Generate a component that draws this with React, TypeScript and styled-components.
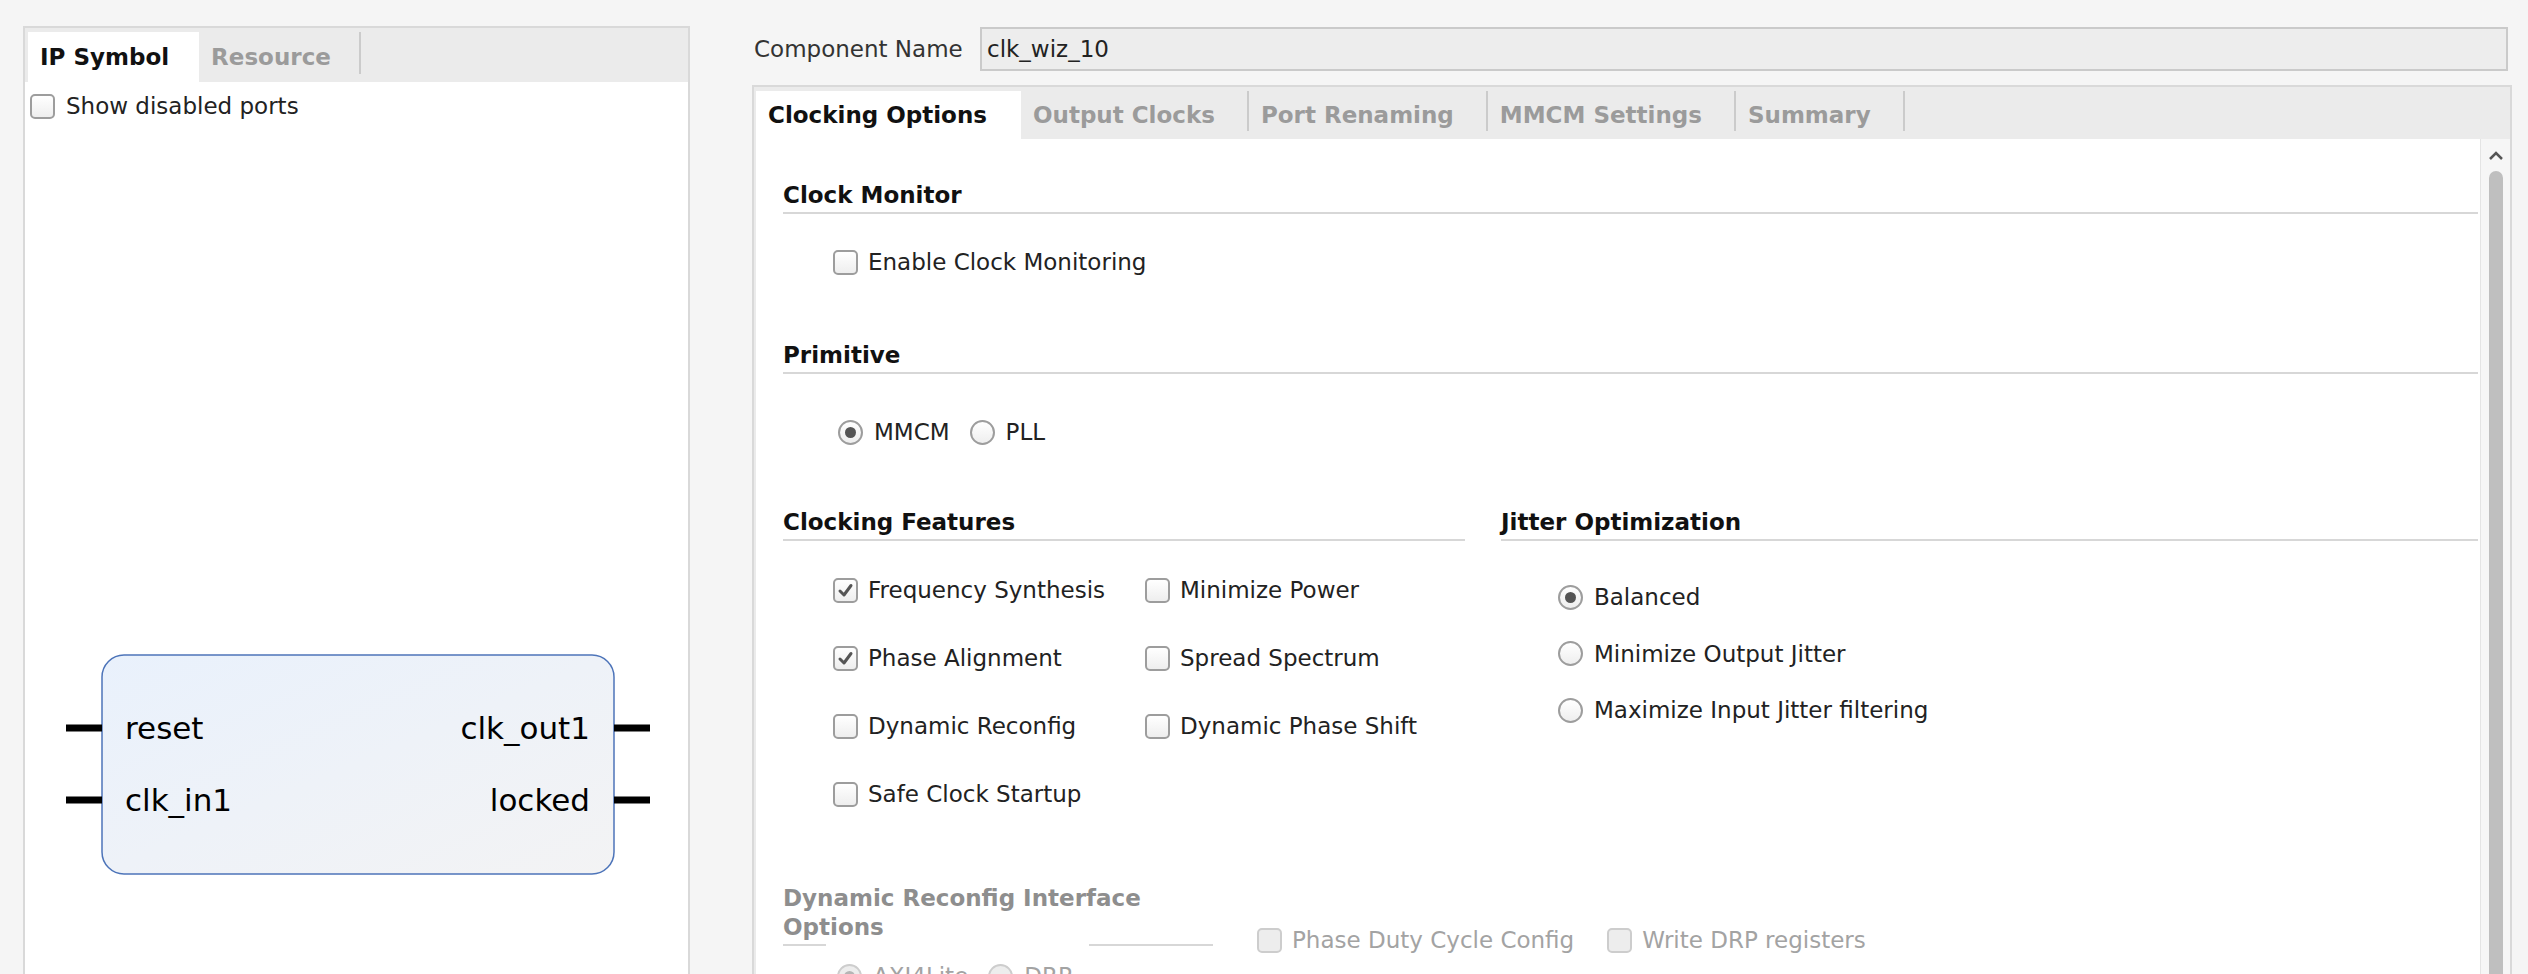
import React from "react";
import styled, { createGlobalStyle } from "styled-components";

const GlobalStyle = createGlobalStyle`
  html, body {
    margin: 0;
    padding: 0;
    background: #f5f5f5;
  }
  body {
    font-family: "DejaVu Sans", "Noto Sans", sans-serif;
    font-size: 23px;
    color: #222;
    overflow: hidden;
  }
`;

const Page = styled.div`
  display: flex;
  align-items: stretch;
  gap: 62px;
  height: 974px;
  padding: 26px 16px 0 23px;
  box-sizing: border-box;
  overflow: hidden;
`;

const LeftPanel = styled.section`
  flex: 0 0 667px;
  box-sizing: border-box;
  border: 2px solid #d9d9d9;
  border-bottom: none;
  background: #ffffff;
  display: flex;
  flex-direction: column;
`;

const TabBar = styled.div<{ $height: number; $left: number }>`
  display: flex;
  align-items: stretch;
  height: ${(p) => p.$height}px;
  padding: 4px 0 0 ${(p) => p.$left}px;
  box-sizing: border-box;
  background: #ebebeb;
  flex: none;
`;

const Tab = styled.div<{ $active?: boolean; $right?: number }>`
  position: relative;
  display: flex;
  align-items: center;
  padding: 0 ${(p) => p.$right ?? 30}px 0 12px;
  font-weight: bold;
  white-space: nowrap;
  color: ${(p) => (p.$active ? "#111" : "#9b9b9b")};
  background: ${(p) => (p.$active ? "#ffffff" : "transparent")};

  &::after {
    content: "";
    display: ${(p) => (p.$active ? "none" : "block")};
    position: absolute;
    right: 0;
    top: 0;
    bottom: 8px;
    width: 2px;
    background: #cbcbcb;
  }
`;

const LeftBody = styled.div`
  display: flex;
  flex-direction: column;
  padding: 10px 0 0 5px;
`;

const SymbolWrap = styled.div`
  margin: 534px 0 0 34px;
  line-height: 0;
`;

const Item = styled.label<{ $disabled?: boolean; $gap?: number }>`
  display: inline-flex;
  align-items: center;
  gap: ${(p) => p.$gap ?? 10}px;
  height: 28px;
  line-height: 28px;
  white-space: nowrap;
  color: ${(p) => (p.$disabled ? "#a3a3a3" : "#222")};
`;

const Box = styled.span<{ $disabled?: boolean }>`
  width: 25px;
  height: 25px;
  box-sizing: border-box;
  border: 2px solid ${(p) => (p.$disabled ? "#cdcdcd" : "#9d9d9d")};
  border-radius: 5px;
  background: ${(p) =>
    p.$disabled ? "#ededed" : "linear-gradient(#ffffff, #eeeeee)"};
  display: inline-flex;
  align-items: center;
  justify-content: center;
  flex: none;
`;

const Round = styled.span<{ $disabled?: boolean }>`
  width: 25px;
  height: 25px;
  box-sizing: border-box;
  border: 2px solid ${(p) => (p.$disabled ? "#cdcdcd" : "#9d9d9d")};
  border-radius: 50%;
  background: ${(p) =>
    p.$disabled ? "#ededed" : "linear-gradient(#ffffff, #eeeeee)"};
  display: inline-flex;
  align-items: center;
  justify-content: center;
  flex: none;
`;

const Dot = styled.span<{ $disabled?: boolean }>`
  width: 11px;
  height: 11px;
  border-radius: 50%;
  background: ${(p) => (p.$disabled ? "#b5b5b5" : "#555555")};
`;

const RightColumn = styled.div`
  flex: 1;
  min-width: 0;
  display: flex;
  flex-direction: column;
`;

const NameRow = styled.div`
  display: flex;
  align-items: center;
  height: 44px;
  margin-top: 1px;
  padding-left: 2px;
  flex: none;
`;

const NameLabel = styled.span`
  width: 226px;
  color: #333;
  white-space: nowrap;
`;

const NameField = styled.div`
  flex: 1;
  height: 44px;
  box-sizing: border-box;
  margin-right: 4px;
  padding-left: 5px;
  border: 2px solid #cacaca;
  background: #ededed;
  display: flex;
  align-items: center;
  color: #222;
`;

const TabPanel = styled.div`
  flex: 1;
  margin-top: 14px;
  border: 2px solid #d9d9d9;
  border-bottom: none;
  background: #ebebeb;
  display: flex;
  flex-direction: column;
`;

const PanelBody = styled.div`
  flex: 1;
  display: flex;
  padding-left: 2px;
`;

const Form = styled.div`
  flex: 1;
  background: #ffffff;
  padding: 42px 2px 0 27px;
  display: flex;
  flex-direction: column;
`;

const ScrollTrack = styled.div`
  flex: 0 0 30px;
  background: #f6f6f6;
  border-left: 1px solid #e4e4e4;
  display: flex;
  flex-direction: column;
  align-items: center;
  padding-top: 12px;
  box-sizing: border-box;
`;

const ScrollThumb = styled.div`
  width: 14px;
  flex: 1;
  margin-top: 10px;
  border-radius: 7px 7px 0 0;
  background: #bfbfbf;
`;

const GroupTitle = styled.div<{ $top?: number }>`
  font-weight: bold;
  line-height: 28px;
  padding-bottom: 3px;
  margin-top: ${(p) => p.$top ?? 0}px;
  border-bottom: 2px solid #d7d7d7;
  color: #111;
`;

const OptionRow = styled.div<{ $top: number; $indent: number; $gap?: number }>`
  display: flex;
  align-items: center;
  gap: ${(p) => p.$gap ?? 20}px;
  height: 28px;
  margin-top: ${(p) => p.$top}px;
  padding-left: ${(p) => p.$indent}px;
`;

const Columns = styled.div`
  display: grid;
  grid-template-columns: 682px 1fr;
  column-gap: 36px;
  margin-top: 62px;
`;

const Column = styled.div`
  display: flex;
  flex-direction: column;
`;

const CheckGrid = styled.div`
  display: grid;
  grid-template-columns: 312px auto;
  grid-auto-rows: 28px;
  row-gap: 40px;
  margin-top: 35px;
  padding-left: 50px;
`;

const RadioList = styled.div`
  display: flex;
  flex-direction: column;
  gap: 28.5px;
  margin-top: 42px;
  padding-left: 57px;
`;

const DynGroup = styled.div`
  display: flex;
  align-items: flex-start;
  margin-top: 76px;
`;

const DynHead = styled.div`
  flex: 0 0 430px;
  display: flex;
  flex-direction: column;
`;

const DynTitle = styled.div`
  font-weight: bold;
  line-height: 29px;
  padding-bottom: 2px;
  color: #8e8e8e;
`;

const BrokenRule = styled.div`
  display: flex;
  justify-content: space-between;
  height: 2px;

  span {
    background: #d7d7d7;
  }
  span:first-child {
    width: 43px;
  }
  span:last-child {
    width: 124px;
  }
`;

const DynOptions = styled.div`
  display: flex;
  gap: 33px;
  margin: 42px 0 0 44px;
`;

const Check = ({
  label,
  checked,
  disabled,
  gap,
}: {
  label: string;
  checked?: boolean;
  disabled?: boolean;
  gap?: number;
}) => (
  <Item $disabled={disabled} $gap={gap}>
    <Box $disabled={disabled}>
      {checked && (
        <svg width="17" height="17" viewBox="0 0 17 17">
          <path
            d="M3 9 L7 13 L14 3.5"
            fill="none"
            stroke="#555"
            strokeWidth="3"
            strokeLinecap="round"
            strokeLinejoin="round"
          />
        </svg>
      )}
    </Box>
    {label}
  </Item>
);

const Radio = ({
  label,
  checked,
  disabled,
}: {
  label: string;
  checked?: boolean;
  disabled?: boolean;
}) => (
  <Item $disabled={disabled} $gap={11}>
    <Round $disabled={disabled}>{checked && <Dot $disabled={disabled} />}</Round>
    {label}
  </Item>
);

const IpSymbol = () => (
  <svg width="588" height="224" viewBox="0 0 588 224">
    <defs>
      <linearGradient id="blockFill" x1="0" y1="0" x2="1" y2="1">
        <stop offset="0" stopColor="#e9f1fc" />
        <stop offset="1" stopColor="#f3f3f4" />
      </linearGradient>
    </defs>
    <rect
      x="38"
      y="1"
      width="512"
      height="219"
      rx="22"
      fill="url(#blockFill)"
      stroke="#4d74b9"
      strokeWidth="1.5"
    />
    <g stroke="#000" strokeWidth="7">
      <line x1="2" y1="74" x2="38" y2="74" />
      <line x1="2" y1="146" x2="38" y2="146" />
      <line x1="550" y1="74" x2="586" y2="74" />
      <line x1="550" y1="146" x2="586" y2="146" />
    </g>
    <g fontFamily="DejaVu Sans, sans-serif" fontSize="31" fill="#000">
      <text x="61" y="85">reset</text>
      <text x="61" y="157">clk_in1</text>
      <text x="526" y="85" textAnchor="end">
        clk_out1
      </text>
      <text x="526" y="157" textAnchor="end">
        locked
      </text>
    </g>
  </svg>
);

const rightTabs = [
  "Clocking Options",
  "Output Clocks",
  "Port Renaming",
  "MMCM Settings",
  "Summary",
];

export default function App() {
  return (
    <>
      <GlobalStyle />
      <Page>
        <LeftPanel>
          <TabBar $height={54} $left={3}>
            <Tab $active>IP Symbol</Tab>
            <Tab>Resource</Tab>
          </TabBar>
          <LeftBody>
            <Check label="Show disabled ports" gap={11} />
            <SymbolWrap>
              <IpSymbol />
            </SymbolWrap>
          </LeftBody>
        </LeftPanel>

        <RightColumn>
          <NameRow>
            <NameLabel>Component Name</NameLabel>
            <NameField>clk_wiz_10</NameField>
          </NameRow>

          <TabPanel>
            <TabBar $height={52} $left={2}>
              {rightTabs.map((t, i) => (
                <Tab key={t} $active={i === 0} $right={34}>
                  {t}
                </Tab>
              ))}
            </TabBar>
            <PanelBody>
              <Form>
                <GroupTitle>Clock Monitor</GroupTitle>
                <OptionRow $top={34} $indent={50}>
                  <Check label="Enable Clock Monitoring" />
                </OptionRow>

                <GroupTitle $top={65}>Primitive</GroupTitle>
                <OptionRow $top={44} $indent={55}>
                  <Radio label="MMCM" checked />
                  <Radio label="PLL" />
                </OptionRow>

                <Columns>
                  <Column>
                    <GroupTitle>Clocking Features</GroupTitle>
                    <CheckGrid>
                      <Check label="Frequency Synthesis" checked />
                      <Check label="Minimize Power" />
                      <Check label="Phase Alignment" checked />
                      <Check label="Spread Spectrum" />
                      <Check label="Dynamic Reconfig" />
                      <Check label="Dynamic Phase Shift" />
                      <Check label="Safe Clock Startup" />
                    </CheckGrid>
                  </Column>
                  <Column>
                    <GroupTitle>Jitter Optimization</GroupTitle>
                    <RadioList>
                      <Radio label="Balanced" checked />
                      <Radio label="Minimize Output Jitter" />
                      <Radio label="Maximize Input Jitter filtering" />
                    </RadioList>
                  </Column>
                </Columns>

                <DynGroup>
                  <DynHead>
                    <DynTitle>Dynamic Reconfig Interface Options</DynTitle>
                    <BrokenRule>
                      <span />
                      <span />
                    </BrokenRule>
                  </DynHead>
                  <DynOptions>
                    <Check label="Phase Duty Cycle Config" disabled />
                    <Check label="Write DRP registers" disabled />
                  </DynOptions>
                </DynGroup>
                <OptionRow $top={8} $indent={54}>
                  <Radio label="AXI4Lite" checked disabled />
                  <Radio label="DRP" disabled />
                </OptionRow>
              </Form>
              <ScrollTrack>
                <svg width="16" height="10" viewBox="0 0 16 10">
                  <polyline
                    points="2,8 8,2 14,8"
                    fill="none"
                    stroke="#555"
                    strokeWidth="2.5"
                  />
                </svg>
                <ScrollThumb />
              </ScrollTrack>
            </PanelBody>
          </TabPanel>
        </RightColumn>
      </Page>
    </>
  );
}
